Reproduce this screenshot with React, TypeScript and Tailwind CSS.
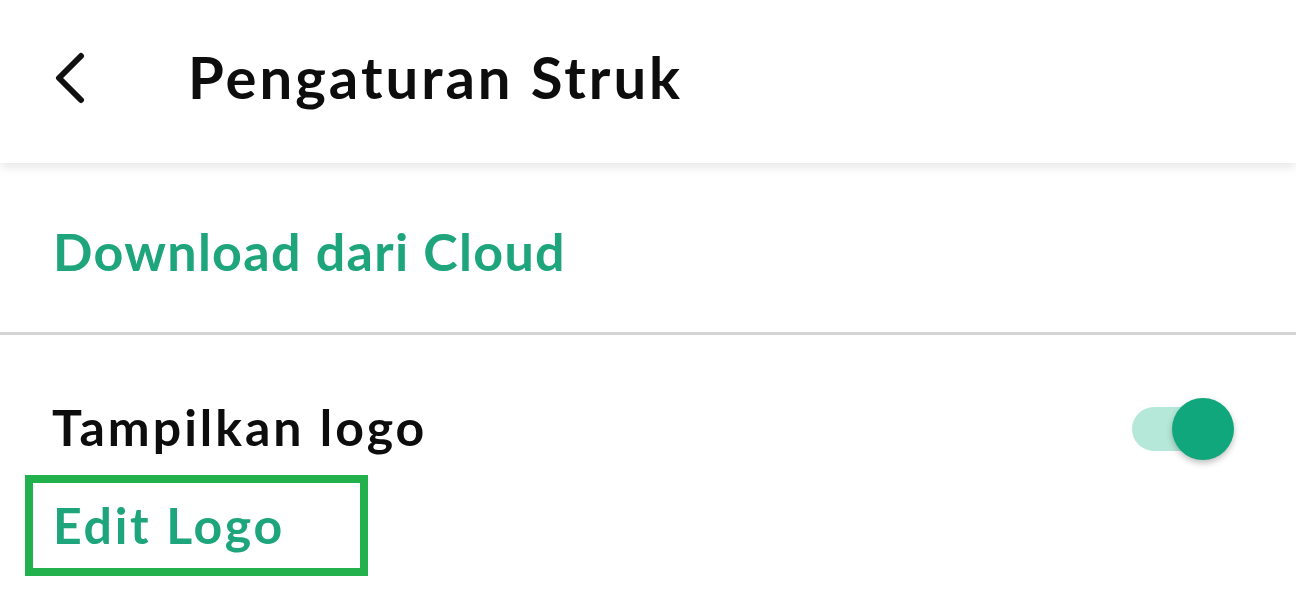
export default function App() {
  return (
    <div className="relative h-[604px] w-[1296px] overflow-hidden bg-white font-['Lato',sans-serif]">
      <header className="relative z-10 flex h-[163px] items-center bg-white shadow-[0_4px_10px_rgba(0,0,0,0.10)]">
        <button className="mb-[8px] ml-[49px] flex h-[60px] w-[40px] items-center justify-center">
          <svg width="36" height="52" viewBox="0 0 36 52" fill="none">
            <polyline
              points="30,4 8,26 30,48"
              stroke="#111"
              strokeWidth="6"
              strokeLinecap="round"
              strokeLinejoin="round"
            />
          </svg>
        </button>
        <h1 className="mb-[10px] ml-[99px] text-[58px] font-bold tracking-[3px] text-[#0d0d0d]">
          Pengaturan Struk
        </h1>
      </header>

      <section className="flex h-[172px] items-center border-b-[3px] border-[#d4d4d4] pl-[53px] pt-[6px]">
        <span className="text-[52px] font-bold tracking-[1.3px] text-[#1ea57c]">
          Download dari Cloud
        </span>
      </section>

      <section className="pt-[55px]">
        <div className="flex items-center justify-between pl-[52px] pr-[62px]">
          <span className="text-[50px] font-bold tracking-[3px] text-[#0d0d0d]">Tampilkan logo</span>
          <div className="relative mt-[2px] h-[62px] w-[102px]">
            <div className="absolute left-0 top-[9px] h-[44px] w-[80px] rounded-full bg-[#b5e8d8]" />
            <div className="absolute right-0 top-0 h-[62px] w-[62px] rounded-full bg-[#11a77c] shadow-[0_3px_6px_rgba(0,0,0,0.25)]" />
          </div>
        </div>
        <div className="ml-[25px] mt-[10px] flex h-[101px] w-[343px] items-center border-[8px] border-[#22b14c] pl-[20px]">
          <span className="text-[50px] font-bold tracking-[2.7px] text-[#1ea57c]">Edit Logo</span>
        </div>
      </section>
    </div>
  );
}
